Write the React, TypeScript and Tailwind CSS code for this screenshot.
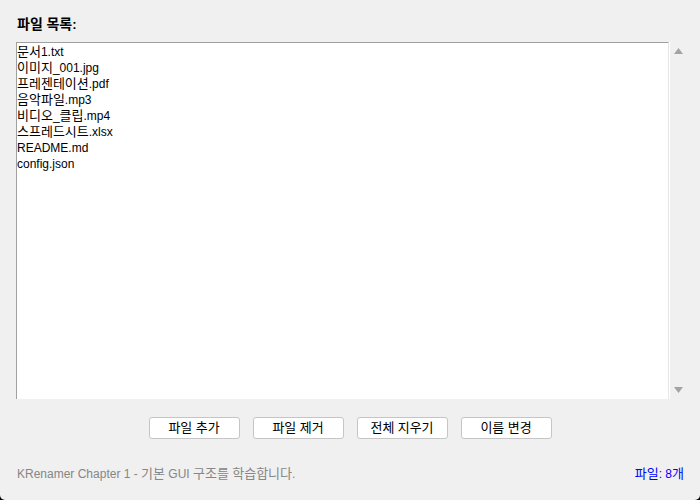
import React from "react";

const files = [
  "문서1.txt",
  "이미지_001.jpg",
  "프레젠테이션.pdf",
  "음악파일.mp3",
  "비디오_클립.mp4",
  "스프레드시트.xlsx",
  "README.md",
  "config.json",
];

const buttons = ["파일 추가", "파일 제거", "전체 지우기", "이름 변경"];

function T({ text, k }: { text: string; k: string }) {
  const parts = text.split(/([\uAC00-\uD7A3\u3131-\u318E]+)/);
  return (
    <span className="whitespace-pre">
      {parts.map((p, i) =>
        /[\uAC00-\uD7A3]/.test(p) ? (
          <span key={i} className={k}>
            {p}
          </span>
        ) : (
          <span key={i}>{p}</span>
        )
      )}
    </span>
  );
}

export default function App() {
  return (
    <div className="w-[700px] h-[500px] bg-black">
      <div
        className="w-[700px] h-[500px] bg-[#f0f0f0] flex flex-col overflow-hidden rounded-b-[5px]"
        style={{ fontFamily: '"Liberation Sans", "Noto Sans CJK KR", sans-serif' }}
      >
        <div className="pl-[17px] pt-[15px] h-[42px] text-[13px] font-bold leading-[18px] text-black">
          <T text="파일 목록:" k="text-[14px]" />
        </div>
        <div className="flex pl-4 pr-[14px] h-[357px]">
          <div className="flex-1 bg-white border-t border-l border-[#a0a0a0] flex flex-col pt-[1px] border-r border-r-[#e6e6e6]">
            {files.map((f) => (
              <div key={f} className="h-4 leading-4 text-[12px] text-black whitespace-nowrap">
                <T text={f} k="text-[13px]" />
              </div>
            ))}
          </div>
          <div className="w-[17px] border-l border-white flex flex-col items-center justify-between py-[6px]">
            <svg width="9" height="6" viewBox="0 0 9 6">
              <path d="M4.5 0 L9 6 L0 6 Z" fill="#a3a3a3" />
            </svg>
            <svg width="9" height="6" viewBox="0 0 9 6">
              <path d="M0 0 L9 0 L4.5 6 Z" fill="#a3a3a3" />
            </svg>
          </div>
        </div>
        <div className="flex justify-center gap-[13px] pt-[18px]">
          {buttons.map((b) => (
            <div
              key={b}
              className="w-[91px] h-[22px] bg-white border border-[#c5c5c5] rounded-[3px] flex items-center justify-center text-[12px] text-black"
            >
              <T text={b} k="text-[13px]" />
            </div>
          ))}
        </div>
        <div className="flex justify-between items-center pl-[17px] pr-4 pt-[27px] text-[12px] leading-4">
          <span className="text-[#868686]">
            <T text="KRenamer Chapter 1 - 기본 GUI 구조를 학습합니다." k="text-[13px]" />
          </span>
          <span className="text-[#0000ff]">
            <T text="파일: 8개" k="text-[13px]" />
          </span>
        </div>
      </div>
    </div>
  );
}
